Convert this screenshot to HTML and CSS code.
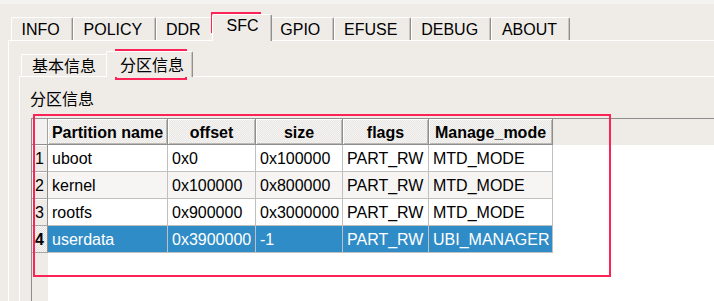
FILE: index.html
```html
<!DOCTYPE html>
<html>
<head>
<meta charset="utf-8">
<link rel="stylesheet" href="styles.css">
</head>
<body>
<div class="topstrip"></div>
<div class="tabbar outer-bar">
  <div class="tab">INFO</div>
  <div class="tab">POLICY</div>
  <div class="tab">DDR</div>
  <div class="tab sel">SFC</div>
  <div class="tab">GPIO</div>
  <div class="tab">EFUSE</div>
  <div class="tab">DEBUG</div>
  <div class="tab">ABOUT</div>
</div>
<div class="panel outer-panel">
  <div class="tabbar inner-bar">
    <div class="itab">基本信息</div>
    <div class="itab sel">分区信息</div>
  </div>
  <div class="panel inner-panel">
    <div class="group-label">分区信息</div>
    <div class="tw">
      <div class="corner"></div>
      <div class="hd">Partition name</div>
      <div class="hd">offset</div>
      <div class="hd">size</div>
      <div class="hd">flags</div>
      <div class="hd">Manage_mode</div>
      <div class="hfill"></div>

      <div class="rh">1</div>
      <div class="c">uboot</div>
      <div class="c">0x0</div>
      <div class="c">0x100000</div>
      <div class="c">PART_RW</div>
      <div class="c">MTD_MODE</div>
      <div class="fill"></div>

      <div class="rh">2</div>
      <div class="c alt">kernel</div>
      <div class="c alt">0x100000</div>
      <div class="c alt">0x800000</div>
      <div class="c alt">PART_RW</div>
      <div class="c alt">MTD_MODE</div>
      <div class="fill"></div>

      <div class="rh">3</div>
      <div class="c">rootfs</div>
      <div class="c">0x900000</div>
      <div class="c">0x3000000</div>
      <div class="c">PART_RW</div>
      <div class="c">MTD_MODE</div>
      <div class="fill"></div>

      <div class="rh cur">4</div>
      <div class="c selrow">userdata</div>
      <div class="c selrow">0x3900000</div>
      <div class="c selrow">-1</div>
      <div class="c selrow">PART_RW</div>
      <div class="c selrow">UBI_MANAGER</div>
      <div class="fill"></div>

      <div class="rfill"></div>
      <div class="vfill"></div>
    </div>
  </div>
</div>
<div class="mark mark-sfc"></div>
<div class="mark mark-subtab"></div>
<div class="mark mark-table"></div>
</body>
</html>
```
FILE: styles.css
```css
html, body {
  margin: 0;
  padding: 0;
}
body {
  width: 714px;
  height: 301px;
  overflow: hidden;
  position: relative;
  background: #efebe7;
  font-family: "Liberation Sans", "Noto Sans CJK SC", sans-serif;
  font-size: 16px;
  color: #000;
}
.topstrip {
  height: 4px;
  background: #f5f3f1;
}
.tabbar {
  display: flex;
  align-items: flex-end;
}
.outer-bar {
  height: 36px;
  padding-left: 11px;
}
.tab {
  position: relative;
  height: 23px;
  box-sizing: border-box;
  padding: 2px 12.3px 1px 9.5px;
  line-height: 19px;
  border-top: 1px solid #fff;
  border-left: 1px solid #fff;
  border-right: 1px solid #8f8f8f;
  box-shadow: inset -1px 0 #c9c6c2;
  border-radius: 2px 2px 0 0;
  white-space: nowrap;
}
.tab.sel {
  height: 27px;
  margin: 0 -2px -1px -2px;
  padding: 1px 12.3px 6px 13.5px;
  z-index: 2;
  background: #efebe7;
}
.panel {
  border-top: 1px solid #fff;
  border-left: 1px solid #fff;
}
.outer-panel {
  margin-left: 8px;
  height: 260px;
}
.inner-bar {
  height: 35px;
  padding-left: 12px;
}
.itab {
  position: relative;
  height: 22px;
  box-sizing: border-box;
  padding: 3px 11px 0 10px;
  line-height: 18px;
  border-top: 1px solid #fff;
  border-left: 1px solid #fff;
  border-right: 1px solid #8f8f8f;
  box-shadow: inset -1px 0 #c9c6c2;
  border-radius: 2px 2px 0 0;
  white-space: nowrap;
}
.itab.sel {
  height: 26px;
  margin: 0 -2px -1px -2px;
  padding: 5px 8px 2px 13px;
  z-index: 2;
  background: #efebe7;
}
.inner-panel {
  margin-left: 10px;
  height: 224px;
}
.group-label {
  margin-top: 13px;
  padding-left: 10px;
  line-height: 20px;
  height: 20px;
}
.tw {
  margin-top: 8px;
  margin-left: 11px;
  height: 182px;
  border-top: 1px solid #8e8e8e;
  border-left: 1px solid #8e8e8e;
  background: #fff;
  display: grid;
  grid-template-columns: 16px 120px 88px 87px 86px 124px 1fr;
  grid-template-rows: 26px repeat(4, 27px) 1fr;
}
.corner {
  background: #f2f1ef;
  border-right: 1px solid #a2a2a2;
  border-bottom: 1px solid #8e8e8e;
}
.hd {
  background: repeating-conic-gradient(#f6f5f3 0 25%, #e8e6e3 0 50%) 0 0 / 2px 2px;
  border-right: 1px solid #8e8e8e;
  border-bottom: 1px solid #8e8e8e;
  box-shadow: inset 1px 1px #fff, inset -1px -1px #bdbab6;
  font-weight: bold;
  text-align: center;
  padding-top: 2px;
  line-height: 23px;
  white-space: nowrap;
  overflow: hidden;
}
.hfill {
  background: #efebe7;
}
.rh {
  background: #efebe7;
  border-right: 1px solid #8e8e8e;
  border-bottom: 1px solid #a9a9a9;
  box-shadow: inset 1px 1px #fff;
  text-align: center;
  padding-top: 2px;
  line-height: 24px;
}
.rh.cur {
  font-weight: bold;
  background: repeating-conic-gradient(#f8f7f6 0 25%, #e3e1de 0 50%) 0 0 / 2px 2px;
  box-shadow: none;
}
.c {
  border-right: 1px solid #c0c0c0;
  border-bottom: 1px solid #c0c0c0;
  padding: 2px 0 0 4px;
  line-height: 24px;
  white-space: nowrap;
  overflow: hidden;
}
.c.alt {
  background: #f7f5f3;
}
.c.selrow {
  background: #308cc6;
  color: #fff;
}
.fill {
  background: #fff;
}
.rfill {
  background: #efebe7;
}
.vfill {
  grid-column: 2 / -1;
  background: #fff;
}
.mark {
  position: absolute;
  box-sizing: border-box;
  border: 2px solid #fd2356;
}
.mark-sfc {
  left: 211px;
  top: 12px;
  width: 50px;
  height: 21px;
}
.mark-subtab {
  left: 115px;
  top: 49px;
  width: 72px;
  height: 31px;
}
.mark-table {
  left: 33px;
  top: 114px;
  width: 578px;
  height: 163px;
}
```
